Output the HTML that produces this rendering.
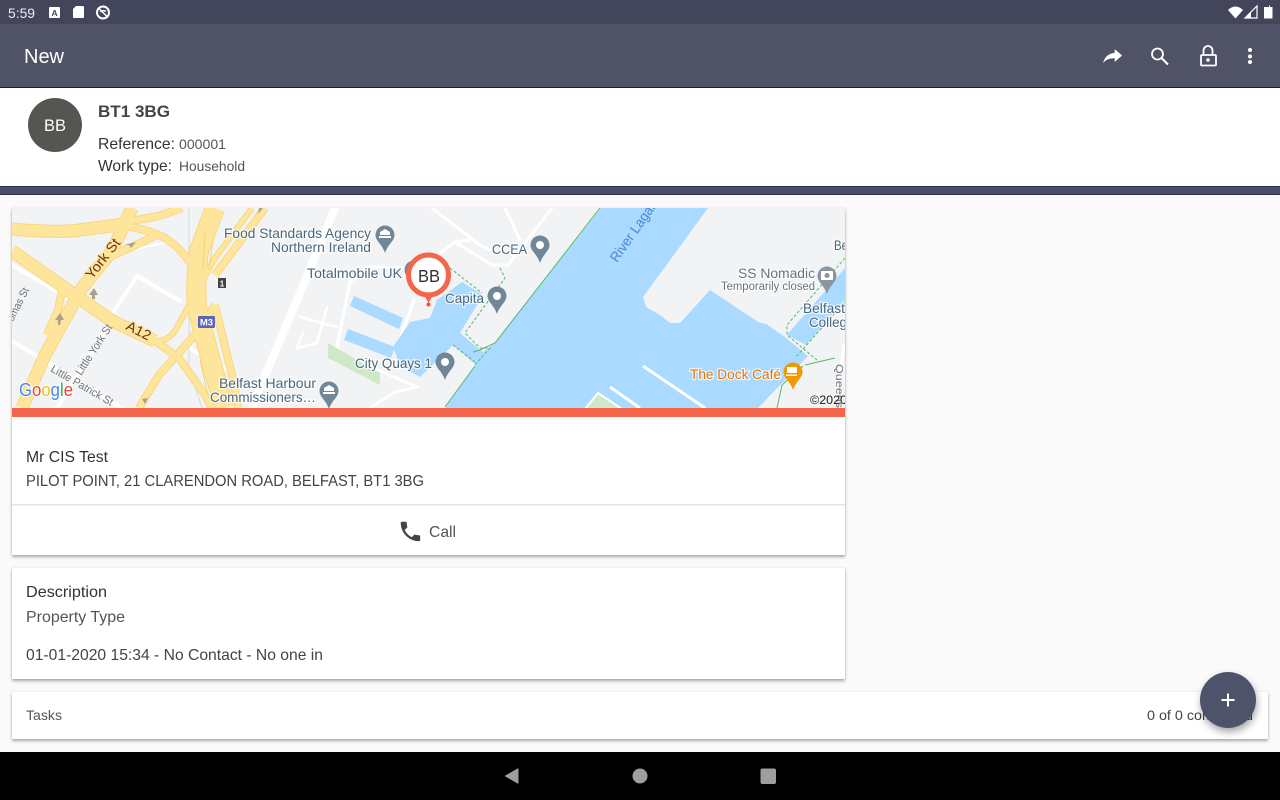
<!DOCTYPE html>
<html lang="en">
<head>
<meta charset="utf-8">
<title>New</title>
<style>
html,body{margin:0;padding:0;width:1280px;height:800px;overflow:hidden;background:#fafafa;font-family:"Liberation Sans",sans-serif}
.b{position:absolute}
.card{position:absolute;background:#fff;box-shadow:0 2px 3px rgba(0,0,0,.32),0 0 2px rgba(0,0,0,.08)}
svg{position:absolute;left:0;top:0}
text{font-family:"Liberation Sans",sans-serif}
.lab{fill:#48687c;font-size:14px;stroke:#fff;stroke-width:2.5px;paint-order:stroke;stroke-opacity:.75}
</style>
</head>
<body>
<div class="b" style="left:0;top:0;width:1280px;height:24px;background:#43465a"></div>
<div class="b" style="left:0;top:24px;width:1280px;height:63px;background:#505266"></div>
<div class="b" style="left:0;top:87px;width:1280px;height:1px;background:#1a1c3a"></div>
<div class="b" style="left:0;top:88px;width:1280px;height:98px;background:#fff"></div>
<div class="b" style="left:0;top:186px;width:1280px;height:9px;background:#4b4e65;border-top:1px solid #2e3150;border-bottom:1px solid #2e3150;box-sizing:border-box"></div>
<div class="card" style="left:12px;top:208px;width:833px;height:347px"></div>
<div class="card" style="left:12px;top:568px;width:833px;height:111px"></div>
<div class="card" style="left:12px;top:692px;width:1256px;height:47px"></div>
<div class="b" style="left:0;top:752px;width:1280px;height:48px;background:#000"></div>

<svg width="1280" height="800" viewBox="0 0 1280 800" xmlns="http://www.w3.org/2000/svg">
<defs>
<clipPath id="mc"><rect x="12" y="208" width="833" height="200"/></clipPath>
<filter id="fs" x="-40%" y="-40%" width="180%" height="180%"><feDropShadow dx="1" dy="4" stdDeviation="4" flood-color="#000" flood-opacity=".35"/></filter>
<path id="pin" d="M0-9.500A9.500 9.500 0 0 1 9.500 0C9.500 6 3 9 0 18-3 9-9.500 6-9.500 0A9.500 9.500 0 0 1 0-9.500Z"/>
<g id="r18" fill="none" stroke-linejoin="round"><path d="M215 208 199 251Q195 280 197 308L212 365 225 408"/></g>
<g id="r12" fill="none" stroke-linejoin="round"><path d="M12 229Q40 232 72 231L125 224"/><path d="M12 251 79 298 112 321 155 341"/><path d="M132 208 112 251 82 288 45 355 22 408"/></g>
<g id="r8" fill="none" stroke-linejoin="round"><path d="M125 226Q150 230 165 238 178 246 189 261L199 271"/><path d="M112 256 155 236"/><path d="M62 291 58 310 47 335"/><path d="M155 341 179 358 205 395 212 408"/><path d="M125 222 159 216 182 208"/><path d="M215 275 265 208"/><path d="M139 408 159 375 192 338 215 305"/><path d="M215 305 235 388 238 408"/></g>
<g id="r5" fill="none" stroke-linejoin="round"><path d="M159 341Q168 340 175 331L194 296 215 258 252 208"/></g>
</defs>

<!-- map -->
<g clip-path="url(#mc)">
<rect x="12" y="208" width="833" height="200" fill="#f2f3f5"/>
<!-- white roads -->
<g fill="none" stroke="#fff" stroke-linejoin="round" stroke-linecap="round">
<path stroke-width="8" d="M335 208 300 293 261 385 252 408"/>
<path stroke-width="4" d="M137 276 114 311M137 276 180 301M12 265 72 300M110 323 57 408M12 341 122 408M189 348 229 371"/>
<path stroke-width="2" d="M125 251 165 243"/>
<path stroke-width="2.500" d="M300 317 337 327M327 307 317 343 297 348 303 333"/>
<path stroke-width="3" d="M350 282 337 347 342 354 417 387 395 392 370 408M350 282 367 267 405 268M455 242 492 265 508 265 552 208M432 208 480 245 490 250M505 208 520 240M470 240 455 242 438 255M414 300 397 347"/>
<path stroke-width="3" d="M844 345 836 400"/>
</g>
<path d="M189 208 189 368 202 408" fill="none" stroke="#d5d8dd" stroke-width="1"/>
<!-- yellow roads -->
<use href="#r18" stroke="#f9d26e" stroke-width="20"/>
<use href="#r12" stroke="#f9d26e" stroke-width="13"/>
<use href="#r8" stroke="#f9d26e" stroke-width="8"/>
<use href="#r5" stroke="#f9d26e" stroke-width="6"/>
<use href="#r18" stroke="#fee59c" stroke-width="18.500"/>
<use href="#r12" stroke="#fee59c" stroke-width="11.500"/>
<use href="#r8" stroke="#fee59c" stroke-width="6.500"/>
<use href="#r5" stroke="#fee59c" stroke-width="4.500"/>
<path d="M205 232 203 270M200 360 208 395M213 240 209 270" stroke="#f9d26e" stroke-width="1" fill="none"/>
<g fill="#a9a18c"><path d="M60 313 64 320 61 320 60 325 58 325 58 320 55 320Z"/><path d="M94 288 98 295 95 295 95 299 92 299 92 295 89 295Z"/><path d="M136 242 131 248 129 245 124 245 Z"/><path d="M145 404 148 398 142 399Z"/><path d="M259 208 263 208 258 214Z"/></g>
<!-- water -->
<path fill="#aadaff" d="M601 208 708 208 643 297 646 307 660 315 670 323 680 323 710 290 758 322 766 324 785 337 808 356 758 408 445 408 476 365 453 345 420 377 400 365 393 347 410 322 430 318 437 300 462 282 483 295 460 333 483 352 495 343Z"/>
<path fill="#aadaff" d="M787 335 845 268 845 300 806 345Z"/>
<path d="M354 296 403 318 399 329 350 306ZM348 329 395 347 391 358 344 340Z" fill="#aadaff"/>
<path fill="#cfe8c8" d="M328 343 380 373 380 385 328 358Z"/>
<path fill="#cfe8c8" stroke="#fff" stroke-width="2" d="M585 409 598 393 622 409Z"/>
<path d="M643 366 705 408M610 387 640 408" stroke="#fff" stroke-width="3" fill="none"/>
<!-- green lines -->
<g fill="none" stroke="#57b86b" stroke-width="1">
<path d="M600 208 495 343 480 350 473 352"/>
<path d="M475 366 445 407"/>
<path d="M805 365 835 358M777 408 782 385 803 366"/>
</g>
<g fill="none" stroke="#57b86b" stroke-width="1" stroke-dasharray="3 2">
<path d="M450 268 482 293"/>
<path d="M500 268 505 278 465 333 480 348 490 348 475 365"/>
<path d="M453 345 475 362"/>
<path d="M845 258 787 325 787 335 817 360M845 302 795 358"/>
</g>
<!-- pins -->
<use href="#pin" x="385" y="235" fill="#6f8796"/>
<use href="#pin" x="540" y="245" fill="#6f8796"/>
<use href="#pin" x="497" y="296" fill="#6f8796"/>
<use href="#pin" x="445" y="362" fill="#6f8796"/>
<use href="#pin" x="329" y="391" fill="#6f8796"/>
<use href="#pin" x="827" y="276" fill="#8a969e"/>
<use href="#pin" x="414" y="270" fill="#6f8796"/>
<use href="#pin" x="793" y="372" fill="#f29900"/>
<g fill="#fff"><circle cx="540" cy="245" r="4"/><circle cx="497" cy="296" r="4"/><circle cx="445" cy="362" r="4"/>
<path d="M379 236H391V238H379ZM380 232 385 229 390 232V235H380Z"/><path d="M323 392H335V394H323ZM324 388 329 385 334 388V391H324Z"/>
<rect x="821" y="271" width="12" height="9" rx="1"/><rect x="787" y="367" width="10" height="6" rx="1"/><rect x="786" y="374.500" width="11" height="1.500"/></g>
<circle cx="827" cy="275.500" r="2.500" fill="#8a969e"/>
<!-- shields -->
<rect x="198" y="316" width="17" height="12" rx="1.500" fill="#5c62bf"/>
<text x="206.500" y="325.500" text-anchor="middle" font-size="9.500" font-weight="bold" fill="#fff">M3</text>
<rect x="218" y="278" width="8" height="10" fill="#444"/>
<text x="222" y="286.500" text-anchor="middle" font-size="8" font-weight="bold" fill="#fff">1</text>
<!-- labels -->
<text class="lab" x="224" y="238" textLength="147" lengthAdjust="spacingAndGlyphs">Food Standards Agency</text>
<text class="lab" x="271" y="252" textLength="100" lengthAdjust="spacingAndGlyphs">Northern Ireland</text>
<text class="lab" x="307" y="278" textLength="95" lengthAdjust="spacingAndGlyphs">Totalmobile UK</text>
<text class="lab" x="445" y="303" textLength="39" lengthAdjust="spacingAndGlyphs">Capita</text>
<text class="lab" x="492" y="254" textLength="35" lengthAdjust="spacingAndGlyphs">CCEA</text>
<text class="lab" x="355" y="368" textLength="77" lengthAdjust="spacingAndGlyphs">City Quays 1</text>
<text class="lab" x="219" y="388" textLength="97" lengthAdjust="spacingAndGlyphs">Belfast Harbour</text>
<text class="lab" x="210" y="402" textLength="106" lengthAdjust="spacingAndGlyphs">Commissioners…</text>
<text class="lab" x="738" y="278" textLength="77" lengthAdjust="spacingAndGlyphs" style="fill:#65747d">SS Nomadic</text>
<text class="lab" x="721" y="290" textLength="94" lengthAdjust="spacingAndGlyphs" style="font-size:11.500px;fill:#65747d">Temporarily closed</text>
<text class="lab" x="803" y="313" textLength="42" lengthAdjust="spacingAndGlyphs">Belfast</text>
<text class="lab" x="809" y="327" textLength="38" lengthAdjust="spacingAndGlyphs">Colleg</text>
<text class="lab" x="834" y="250" textLength="14" lengthAdjust="spacingAndGlyphs">Be</text>
<text class="lab" x="690" y="379" textLength="91" lengthAdjust="spacingAndGlyphs" style="fill:#e8710a">The Dock Café</text>
<text transform="translate(617 263) rotate(-55)" font-size="14" fill="#4a86d4" textLength="72" lengthAdjust="spacingAndGlyphs">River Lagan</text>
<text transform="translate(92 280) rotate(-52)" font-size="14" fill="#6b3416" textLength="47" lengthAdjust="spacingAndGlyphs" style="stroke:#fee59c;stroke-width:2px;paint-order:stroke">York St</text>
<text transform="translate(125 329) rotate(27)" font-size="14" fill="#6b3416" textLength="26" lengthAdjust="spacingAndGlyphs" style="stroke:#fee59c;stroke-width:2px;paint-order:stroke">A12</text>
<text transform="translate(81 376) rotate(-57)" font-size="11" fill="#6f7377" textLength="58" lengthAdjust="spacingAndGlyphs">Little York St</text>
<text transform="translate(50 371) rotate(30)" font-size="11" fill="#6f7377" textLength="70" lengthAdjust="spacingAndGlyphs">Little Patrick St</text>
<text transform="translate(13 322) rotate(-63)" font-size="11" fill="#6f7377" textLength="36" lengthAdjust="spacingAndGlyphs">omas St</text>
<text transform="translate(836 364) rotate(90)" font-size="10" fill="#6f7377" textLength="44" lengthAdjust="spacingAndGlyphs">Queens</text>
<text x="19" y="396" font-size="18" textLength="54" lengthAdjust="spacingAndGlyphs" style="stroke:#fff;stroke-width:2px;paint-order:stroke"><tspan fill="#4285f4">G</tspan><tspan fill="#ea4335">o</tspan><tspan fill="#fbbc05">o</tspan><tspan fill="#4285f4">g</tspan><tspan fill="#34a853">l</tspan><tspan fill="#ea4335">e</tspan></text>
<text x="810" y="404" font-size="12" fill="#222" textLength="37" lengthAdjust="spacingAndGlyphs">©2020</text>
</g>
<rect x="12" y="408" width="833" height="9" fill="#f4654a"/>
<!-- marker -->
<path d="M424 295 428.500 303 433 295Z" fill="#f4654a"/>
<circle cx="428.500" cy="304.500" r="2" fill="#f4532f"/>
<circle cx="428.500" cy="275" r="20" fill="#fff" stroke="#f4654a" stroke-width="5"/>
<text x="418" y="282" font-size="17.500" fill="#333" textLength="22" lengthAdjust="spacingAndGlyphs">BB</text>

<!-- status bar -->
<text x="8" y="18" font-size="14" fill="#eceef2" textLength="27" lengthAdjust="spacingAndGlyphs">5:59</text>
<rect x="49" y="7" width="11" height="11" rx="1" fill="#fff"/>
<text x="51.500" y="16" font-size="8.500" font-weight="bold" fill="#43465a">A</text>
<path d="M76 6H82.500Q84 6 84 7.500V17Q84 18 83 18H74Q73 18 73 17V9Z" fill="#fff"/>
<circle cx="103" cy="12.500" r="6" fill="none" stroke="#fff" stroke-width="2"/>
<path d="M99 8.500 107 16.500M100.500 12Q103 9.500 106 11.500" stroke="#fff" stroke-width="1.500" fill="none"/>
<path d="M1228 10Q1235.500 3 1243 10L1235.500 18.500Z" fill="#fff"/>
<path d="M1245 18 1257 6V18Z" fill="none" stroke="#fff" stroke-width="1.200"/>
<path d="M1245 18 1251 12V18Z" fill="#fff"/>
<path d="M1266 7H1269V5.500H1270V7H1272.500V18.500H1264V7Z" fill="#fff"/>

<!-- toolbar -->
<text x="24" y="63" font-size="20" fill="#fff" textLength="40" lengthAdjust="spacingAndGlyphs">New</text>
<path transform="translate(1100 44.500) scale(1.050 .92)" fill="#fff" d="M14 9V5l7 7-7 7v-4.100c-5 0-8.500 1.600-11 5.100 1-5 4-10 11-11z"/>
<circle cx="1157.500" cy="54" r="5.500" fill="none" stroke="#fff" stroke-width="1.800"/>
<path d="M1161.500 58 1168 64.500" stroke="#fff" stroke-width="2" fill="none"/>
<path d="M1203.500 55V50.500a4.500 4.500 0 0 1 9 0V55" fill="none" stroke="#fff" stroke-width="1.800"/>
<rect x="1201" y="55" width="15" height="10.500" rx="1" fill="none" stroke="#fff" stroke-width="1.800"/>
<circle cx="1208" cy="60" r="1.800" fill="#fff"/>
<circle cx="1250" cy="50" r="2" fill="#fff"/><circle cx="1250" cy="56.500" r="2" fill="#fff"/><circle cx="1250" cy="62" r="2" fill="#fff"/>

<!-- header -->
<circle cx="55" cy="125" r="27" fill="#555551"/>
<text x="44" y="131" font-size="16.500" fill="#fff" textLength="22" lengthAdjust="spacingAndGlyphs">BB</text>
<text x="98" y="117" font-size="17" font-weight="bold" fill="#444" textLength="72" lengthAdjust="spacingAndGlyphs">BT1 3BG</text>
<text x="98" y="149" font-size="16" fill="#333" textLength="77" lengthAdjust="spacingAndGlyphs">Reference:</text>
<text x="179" y="149" font-size="14" fill="#555" textLength="47" lengthAdjust="spacingAndGlyphs">000001</text>
<text x="98" y="171" font-size="16" fill="#333" textLength="74" lengthAdjust="spacingAndGlyphs">Work type:</text>
<text x="179" y="171" font-size="14" fill="#555" textLength="66" lengthAdjust="spacingAndGlyphs">Household</text>

<!-- card 1 -->
<text x="26" y="462" font-size="16" fill="#333" textLength="82" lengthAdjust="spacingAndGlyphs">Mr CIS Test</text>
<text x="26" y="486" font-size="16" fill="#444" textLength="398" lengthAdjust="spacingAndGlyphs">PILOT POINT, 21 CLARENDON ROAD, BELFAST, BT1 3BG</text>
<rect x="12" y="504" width="833" height="1.500" fill="#e4e4e4"/>
<path transform="translate(397.500 518.500) scale(1.080)" fill="#444" d="M6.620 10.790c1.440 2.830 3.760 5.140 6.590 6.590l2.200-2.200c.27-.27.670-.36 1.020-.24 1.120.370 2.330.570 3.570.570.550 0 1 .450 1 1V20c0 .550-.45 1-1 1-9.390 0-17-7.610-17-17 0-.55.450-1 1-1h3.500c.550 0 1 .450 1 1 0 1.250.200 2.450.570 3.570.110.350.030.740-.25 1.020l-2.200 2.200z"/>
<text x="429" y="537" font-size="16" fill="#555" textLength="27" lengthAdjust="spacingAndGlyphs">Call</text>

<!-- card 2 -->
<text x="26" y="597" font-size="16" fill="#333" textLength="81" lengthAdjust="spacingAndGlyphs">Description</text>
<text x="26" y="622" font-size="16" fill="#555" textLength="99" lengthAdjust="spacingAndGlyphs">Property Type</text>
<text x="26" y="660" font-size="16" fill="#444" textLength="297" lengthAdjust="spacingAndGlyphs">01-01-2020 15:34 - No Contact - No one in</text>

<!-- card 3 -->
<text x="26" y="720" font-size="14" fill="#555" textLength="36" lengthAdjust="spacingAndGlyphs">Tasks</text>
<text x="1147" y="720" font-size="14" fill="#444" textLength="106" lengthAdjust="spacingAndGlyphs">0 of 0 completed</text>

<!-- FAB -->
<circle cx="1228" cy="700" r="28" fill="#50526a" filter="url(#fs)"/>
<path d="M1228 693.500V706.500M1221.500 700H1234.500" stroke="#fff" stroke-width="2"/>

<!-- nav -->
<path d="M504.500 776 517.500 768.500Q518.500 768 518.500 769V783Q518.500 784 517.500 783.500Z" fill="#9e9e9e"/>
<circle cx="640" cy="776" r="7.500" fill="#9e9e9e"/>
<rect x="760.500" y="768.500" width="15.500" height="15.500" rx="2" fill="#9e9e9e"/>
</svg>
</body>
</html>
